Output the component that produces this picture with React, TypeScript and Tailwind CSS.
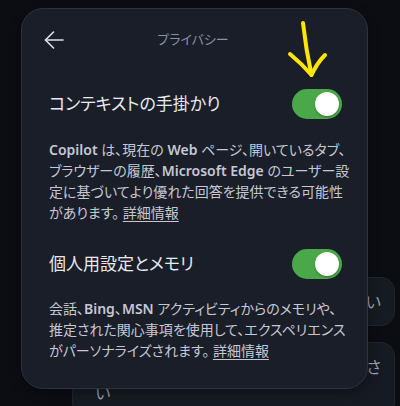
import React from 'react';

const jp = "font-['Noto_Sans','Noto_Sans_CJK_JP',sans-serif] [font-feature-settings:'palt']";

function Toggle() {
  return (
    <div className="flex h-[30px] w-[50px] shrink-0 items-center justify-end rounded-full bg-[#4aa84a] pr-[3px]">
      <div className="h-[24px] w-[24px] rounded-full bg-white shadow-[0_1px_2px_rgba(0,0,0,0.35)]" />
    </div>
  );
}

function More() {
  return <span className="underline underline-offset-[3px]">詳細情報</span>;
}

export default function App() {
  return (
    <div className={`relative h-[406px] w-[400px] overflow-hidden bg-[#0b0d13] ${jp}`}>
      {/* --- chat bubbles behind the dialog --- */}
      <div className="flex flex-col items-end gap-[16px] pr-[5px] pt-[277px] text-[16px] text-[#9ca0ab] [font-feature-settings:normal]">
        <div className="flex h-[49px] w-[323px] items-center rounded-[14px] border border-[#20242d] bg-[#161a22] pl-[22px]">
          <span className="whitespace-nowrap">このページの要点を三つ教えてください</span>
        </div>
        <div className="w-[323px] whitespace-nowrap rounded-[14px] border border-[#20242d] bg-[#161a22] pb-[10px] pl-[22px] pt-[11px] leading-[26px]">
          この記事をわかりやすく説明してくださ<br />い
        </div>
      </div>

      {/* --- privacy dialog --- */}
      <div className="absolute left-[21px] top-[8px] flex h-[381px] w-[347px] flex-col rounded-[22px] border border-[#2d323e] bg-[#1a1e29] pl-[22px] pr-[25px] shadow-[0_4px_12px_rgba(0,0,0,0.35)]">
        <div className="relative mt-[11px] flex h-[40px] items-center">
          <svg width="20" height="18" viewBox="0 0 20 18" fill="none" stroke="#dfe2ea" strokeWidth="1.6" strokeLinecap="round" strokeLinejoin="round">
            <path d="M19 9H1.5" />
            <path d="M9.5 1 1.5 9l8 8" />
          </svg>
          <span className="absolute left-1/2 -translate-x-1/2 text-[13px] text-[#8c91a1]">プライバシー</span>
        </div>

        <div className="ml-[5px] mt-[29px] flex items-center justify-between">
          <span className="text-[17px] text-[#e8eaf0]">コンテキストの手掛かり</span>
          <Toggle />
        </div>
        <p className="ml-[5px] mt-[20px] whitespace-nowrap text-[14px] leading-[21px] text-[#c5c8d2]">
          <span className="font-semibold">Copilot</span> は、現在の <span className="font-semibold">Web</span> ページ、開いているタブ、<br />
          ブラウザーの履歴、<span className="font-semibold">Microsoft Edge</span> のユーザー設<br />
          定に基づいてより優れた回答を提供できる可能性<br />
          があります。 <More />
        </p>

        <div className="ml-[5px] mt-[26px] flex items-center justify-between">
          <span className="text-[17px] text-[#e8eaf0]">個人用設定とメモリ</span>
          <Toggle />
        </div>
        <p className="ml-[5px] mt-[19px] whitespace-nowrap text-[14px] leading-[21px] text-[#c5c8d2]">
          会話、<span className="font-semibold">Bing</span>、<span className="font-semibold">MSN</span> アクティビティからのメモリや、<br />
          推定された関心事項を使用して、エクスペリエンス<br />
          がパーソナライズされます。 <More />
        </p>
      </div>

      {/* --- yellow annotation arrow --- */}
      <svg className="pointer-events-none absolute left-0 top-0" width="400" height="406" fill="none" stroke="#ffe600" strokeWidth="4" strokeLinecap="round" strokeLinejoin="round">
        <path d="M303 23 Q306 50 311.5 75" />
        <path d="M290 54 Q302 64 311.5 75 Q317 63 325 55" />
      </svg>
    </div>
  );
}
